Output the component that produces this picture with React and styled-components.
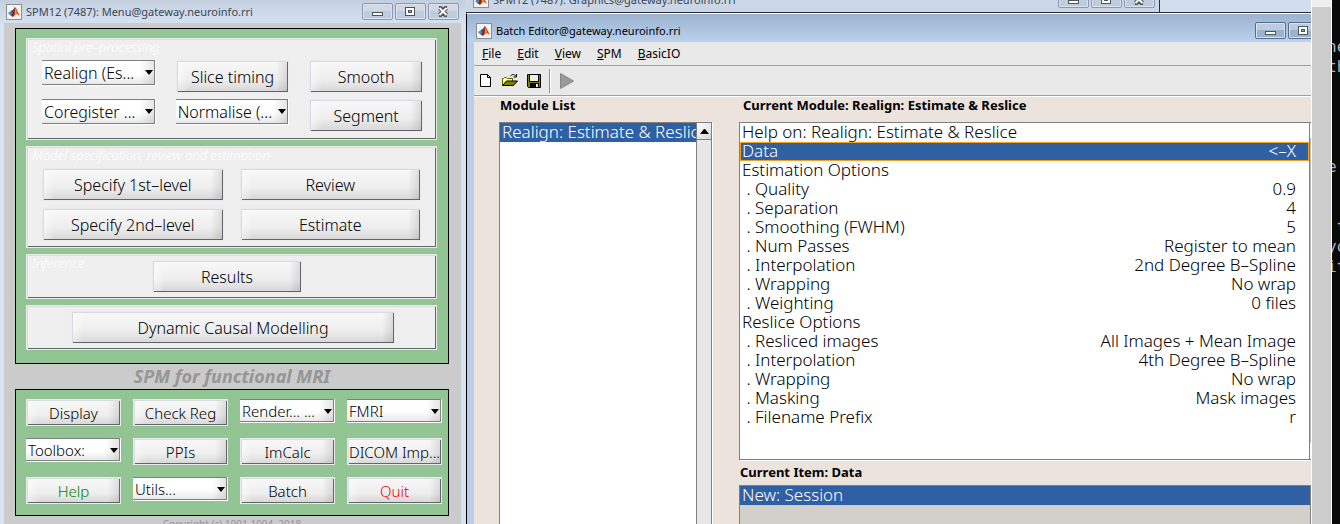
import React from "react";
import styled, { createGlobalStyle, css } from "styled-components";

const GlobalStyle = createGlobalStyle`
  *, *::before, *::after { box-sizing: border-box; }
  html, body { margin: 0; }
  body {
    background: #0a0a0a;
    color: #000;
    font-family: "Noto Sans", "Open Sans", sans-serif;
    font-size: 16px;
  }
  button, select { font-family: inherit; color: inherit; }
`;

const Desktop = styled.div`
  display: flex;
  align-items: stretch;
  height: 100vh;
  overflow: hidden;
`;

/* ---------- window chrome ---------- */

const TitleBar = styled.header`
  display: flex;
  flex: none;
  align-items: center;
  gap: 4px;
  height: ${(p) => (p.$active ? 28 : 23)}px;
  padding: ${(p) => (p.$active ? "5px 0 0 5px" : "0 1px 0 2px")};
  color: ${(p) => (p.$active ? "#000" : "#3c4654")};
  background: ${(p) =>
    p.$active
      ? "linear-gradient(#9cb3cf, #bad2ee)"
      : "linear-gradient(#c4cfde, #d5e1f1)"};
`;

const WindowTitle = styled.h1`
  flex: 1;
  min-width: 0;
  margin: 0;
  overflow: hidden;
  white-space: nowrap;
  font-size: 11px;
  line-height: 16px;
  font-weight: 400;
`;

const WindowButtons = styled.div`
  display: flex;
  flex: none;
  gap: 2px;
`;

const WindowButton = styled.button`
  display: flex;
  align-items: center;
  justify-content: center;
  width: 31px;
  height: 17px;
  padding: 0;
  border: 1px solid ${(p) => (p.$active ? "#566d8c" : "#8a99af")};
  border-radius: 2px;
  background: ${(p) =>
    p.$active
      ? "linear-gradient(#bccbdd 0 50%, #9ab2cf 50% 100%)"
      : "linear-gradient(#cfd8e4 0 50%, #bfccdd 50% 100%)"};
  box-shadow: inset 0 0 0 1px #d9e3ee;
`;

const Glyphs = {
  minimize: <rect x="3.500" y="7.500" width="10" height="3" fill="#fff" stroke="#4c545e" />,
  maximize: (
    <>
      <rect x="3.500" y="2.500" width="9" height="8" fill="#fff" stroke="#4c545e" />
      <rect x="6.500" y="5.500" width="3" height="2" fill="#8ea3bd" stroke="#4c545e" />
    </>
  ),
  close: (
    <>
      <path d="M4 3h1.500l2.500 2.500 2.500-2.500h1.500M4 10h1.500l2.500-2.500 2.500 2.500h1.500M4.500 3l7 7M11.500 3l-7 7" fill="none" stroke="#4c545e" strokeWidth="4" />
      <path d="M4.500 3l7 7M11.500 3l-7 7" stroke="#fff" strokeWidth="2" />
    </>
  ),
};

function Controls({ active }) {
  return (
    <WindowButtons>
      {["minimize", "maximize", "close"].map((k) => (
        <WindowButton key={k} $active={active} aria-label={k}>
          <svg width="17" height="13" viewBox="0 0 17 13">{Glyphs[k]}</svg>
        </WindowButton>
      ))}
    </WindowButtons>
  );
}

const IconBox = styled.svg`
  flex: none;
  width: 16px;
  height: 16px;
`;

const IconPad = styled.span`
  display: flex;
  padding-left: 4px;
`;

const MenuControls = styled.div`
  padding-right: 6px;
`;

function MatlabIcon() {
  return (
    <IconBox viewBox="0 0 16 16" aria-hidden="true">
      <rect x="0.500" y="0.500" width="15" height="15" fill="#f4f4f4" stroke="#8c8c8c" />
      <path d="M2 9l3-2 2-1 2-3-1 6-3 3z" fill="#4a86b8" />
      <path d="M5 7l2-1 2-3v4l-2 3z" fill="#27506f" />
      <path d="M9 3c2 2 3 6 5 9l-3-2-2 1-2 2-2-2c2-1 3-5 4-8z" fill="#d1491c" />
      <path d="M9 4c0 3-1 6-2 9l-2-2c2-1 3-4 4-7z" fill="#7d1f12" />
      <path d="M9 4l2 5-2 2z" fill="#f09a2c" />
    </IconBox>
  );
}

/* ---------- raised controls ---------- */

const raised = css`
  border: 1px solid #ebebee;
  box-shadow: inset 1px 1px #dadbe2, inset -1px -1px #64646c;
`;

const PushButton = styled.button`
  ${raised}
  width: ${(p) => p.$width || "100%"};
  height: ${(p) => (p.$small ? 27 : 33)}px;
  padding: 0;
  overflow: hidden;
  white-space: nowrap;
  font-size: ${(p) => (p.$small ? 15 : 16)}px;
  font-weight: 300;
  line-height: 20px;
  color: ${(p) => p.$color || "#000"};
  background:
    linear-gradient(90deg, #ffffff80, #ffffff00 12px, #00000000 calc(100% - 12px), #0000001c),
    linear-gradient(#f8f8f8, #eeeeee 60%, #d6d6d6);
`;

const SelectBox = styled.label`
  position: relative;
  display: block;
  height: ${(p) => (p.$small ? 24 : 26)}px;
  border-right: 1px solid #fff;
  border-bottom: 1px solid #fff;

  &::after {
    content: "";
    position: absolute;
    right: 2px;
    top: 10px;
    border: 4px solid transparent;
    border-top: 5px solid #000;
    border-bottom: 0;
    pointer-events: none;
  }
`;

const Select = styled.select`
  appearance: none;
  display: block;
  width: 100%;
  height: 100%;
  padding: 0 0 0 2px;
  border: 1px solid #7f7f7f;
  border-left: 0;
  border-radius: 0;
  font-size: ${(p) => (p.$small ? 15 : 16)}px;
  font-weight: 300;
  background:
    linear-gradient(90deg, #00000000 calc(100% - 14px), #0000001a),
    linear-gradient(#fff 55%, #e8e8e8);
`;

function Popup({ label, small }) {
  return (
    <SelectBox $small={small}>
      <Select $small={small} aria-label={label}>
        <option>{label}</option>
      </Select>
    </SelectBox>
  );
}

/* ---------- menu window ---------- */

const MenuWindow = styled.section`
  display: flex;
  flex: 0 0 466px;
  flex-direction: column;
  overflow: hidden;
  background: #d7e3f3;
`;

const MenuBody = styled.div`
  flex: 1;
  margin: 0 5px 0 4px;
  padding: 5px 12px 0 11px;
  background: #cbcbcb;
`;

const GreenPanel = styled.div`
  border: 1px solid #000;
  background: #93c594;
`;

const UpperPanel = styled(GreenPanel)`
  display: flex;
  flex-direction: column;
  gap: 6px;
  padding: 9px 11px 13px 10px;
`;

const LowerPanel = styled(GreenPanel)`
  display: grid;
  grid-template-columns: repeat(4, 1fr);
  grid-auto-rows: 27px;
  gap: 12px 12px;
  padding: 9px 6px 11px 10px;
`;

const Frame = styled.fieldset`
  ${raised}
  margin: 0;
  padding: 4px;
  min-width: 0;
  background: #efefef;
`;

const FrameTitle = styled.h2`
  height: ${(p) => (p.$overlaid ? 0 : 16)}px;
  margin: 0;
  padding-left: 1px;
  overflow: visible;
  white-space: nowrap;
  color: #fff;
  font-size: 13px;
  line-height: 9px;
  font-style: italic;
  font-weight: 300;
`;

const FrameGrid = styled.div`
  display: grid;
  grid-template-columns: repeat(${(p) => p.$cols}, 1fr);
  gap: ${(p) => (p.$cols === 3 ? "6px 20px" : "7px 16px")};
  padding: ${(p) => (p.$cols === 3 ? "1px 9px 3px 11px" : "1px 11px 2px 11px")};
`;

const Centered = styled.div`
  display: flex;
  justify-content: center;
  padding: ${(p) => (p.$wide ? "1px 0 1px 3px" : "1px 9px 1px 0")};
`;

const Suite = styled.p`
  margin: 0;
  color: #969696;
  font-size: 18px;
  line-height: 25px;
  font-style: italic;
  font-weight: 700;
  text-align: center;
`;

const Copyright = styled.p`
  margin: 0;
  color: #969696;
  font-size: 10px;
  line-height: 16px;
  text-align: center;
`;

function MenuApp() {
  return (
    <MenuWindow>
      <TitleBar>
        <IconPad><MatlabIcon /></IconPad>
        <WindowTitle>SPM12 (7487): Menu@gateway.neuroinfo.rri</WindowTitle>
        <MenuControls><Controls /></MenuControls>
      </TitleBar>
      <MenuBody>
        <UpperPanel>
          <Frame>
            <FrameTitle>Spatial pre–processing</FrameTitle>
            <FrameGrid $cols={3}>
              <Popup label="Realign (Es..." />
              <PushButton>Slice timing</PushButton>
              <PushButton>Smooth</PushButton>
              <Popup label="Coregister ..." />
              <Popup label="Normalise (..." />
              <PushButton>Segment</PushButton>
            </FrameGrid>
          </Frame>
          <Frame>
            <FrameTitle>Model specification, review and estimation</FrameTitle>
            <FrameGrid $cols={2}>
              <PushButton>Specify 1st–level</PushButton>
              <PushButton>Review</PushButton>
              <PushButton>Specify 2nd–level</PushButton>
              <PushButton>Estimate</PushButton>
            </FrameGrid>
          </Frame>
          <Frame>
            <FrameTitle $overlaid>Inference</FrameTitle>
            <Centered><PushButton $width="150px">Results</PushButton></Centered>
          </Frame>
          <Frame>
            <Centered $wide><PushButton $width="324px">Dynamic Causal Modelling</PushButton></Centered>
          </Frame>
        </UpperPanel>
        <Suite>SPM for functional MRI</Suite>
        <LowerPanel>
          <PushButton $small>Display</PushButton>
          <PushButton $small>Check Reg</PushButton>
          <Popup small label="Render... ..." />
          <Popup small label="FMRI" />
          <Popup small label="Toolbox:" />
          <PushButton $small>PPIs</PushButton>
          <PushButton $small>ImCalc</PushButton>
          <PushButton $small>DICOM Imp...</PushButton>
          <PushButton $small $color="#008000">Help</PushButton>
          <Popup small label="Utils..." />
          <PushButton $small>Batch</PushButton>
          <PushButton $small $color="#f00000">Quit</PushButton>
        </LowerPanel>
        <Copyright>Copyright (c) 1991,1994–2018</Copyright>
      </MenuBody>
    </MenuWindow>
  );
}

/* ---------- batch editor window ---------- */

const RightStack = styled.div`
  display: flex;
  flex: 1;
  flex-direction: column;
  min-width: 0;
  border-right: 1px solid #fff;
  background: #cbd7e7;
`;

const BehindRow = styled.div`
  display: flex;
  flex: none;
  align-items: flex-end;
  height: 13px;
  padding-left: 3px;
  overflow: hidden;
  border-bottom: 1px solid #2c2c34;
  background: #cbd7e7;
`;

const GraphicsBar = styled.div`
  display: flex;
  flex: 1;
  align-items: flex-end;
  gap: 4px;
  height: 23px;
  padding: 0 4px 4px 4px;
  color: #3c4654;
  border-right: 1px solid #2c2c34;
`;

const FarWindow = styled.div`
  flex: 0 0 151px;
  height: 12px;
  background: #d3deec;
`;

const BatchWindow = styled.section`
  display: flex;
  flex: 1;
  flex-direction: column;
  min-height: 0;
  border-left: 1px solid #000;
  border-top: 1px solid #fff;
  background: #b9cfe9;
`;

const BatchControls = styled.div`
  display: flex;
  flex: 0 0 56px;
  overflow: hidden;
`;

const BatchFrame = styled.div`
  display: flex;
  flex: 1;
  flex-direction: column;
  min-height: 0;
  margin-left: 7px;
  background: #ece3dd;
`;

const barEdge = css`
  border-bottom: 1px solid #a0a0a0;
  box-shadow: 0 1px #fff;
  background: #e9e9e9;
`;

const MenuBar = styled.nav`
  ${barEdge}
  display: flex;
  flex: none;
  align-items: center;
  gap: 16px;
  height: 24px;
  padding-left: 8px;
`;

const MenuItem = styled.button`
  padding: 0;
  border: 0;
  background: none;
  font-size: 12px;
  line-height: 16px;

  &::first-letter { text-decoration: underline; }
`;

const ToolBar = styled.div`
  ${barEdge}
  display: flex;
  flex: none;
  align-items: center;
  gap: 8px;
  height: 30px;
  padding: 0 0 0 4px;
`;

const ToolButton = styled.button`
  display: flex;
  padding: 0;
  border: 0;
  background: none;
`;

const Separator = styled.span`
  width: 2px;
  height: 24px;
  margin: 0 0 0 -1px;
  border-left: 1px solid #8d8d8d;
  border-right: 1px solid #fff;
`;

const BatchBody = styled.div`
  display: flex;
  flex: 1;
  gap: 27px;
  min-height: 0;
  padding-left: 25px;
`;

const ModuleColumn = styled.div`
  display: flex;
  flex: 0 0 213px;
  flex-direction: column;
  min-width: 0;
`;

const DetailColumn = styled.div`
  display: flex;
  flex: 1;
  flex-direction: column;
  min-width: 0;
`;

const Heading = styled.h2`
  margin: 0;
  padding-left: ${(p) => p.$indent || 1}px;
  font-size: 13px;
  line-height: ${(p) => p.$line || 18}px;
  height: ${(p) => p.$height || 26}px;
  font-weight: 700;
  white-space: nowrap;
`;

const ListBox = styled.div`
  display: flex;
  flex: ${(p) => p.$flex || "1"};
  min-width: 0;
  min-height: 0;
  border: 1px solid #7f7f7f;
  border-bottom-width: ${(p) => (p.$closed ? 1 : 0)}px;
  border-right-width: ${(p) => (p.$edge ? 0 : 1)}px;
  box-shadow: 1px 1px #fff;
  background: ${(p) => p.$fill || "#fff"};
`;

const Options = styled.ul`
  flex: 1;
  min-width: 0;
  margin: 0;
  padding: 0;
  overflow: hidden;
  list-style: none;
`;

const Option = styled.li`
  display: flex;
  justify-content: space-between;
  height: 19px;
  padding: 0 13px 0 2px;
  white-space: pre;
  font-size: 17px;
  font-weight: 300;
  line-height: 18px;
  ${(p) => p.$selected && "color: #fff; background: #2f60a3;"}
  ${(p) => p.$focused && "outline: 1px solid #f5a01c; outline-offset: -1px;"}
`;

const ScrollTrack = styled.div`
  flex: 0 0 15px;
  border-left: 1px solid #7f7f7f;
  background: #e8e8e8;
`;

const ScrollUp = styled.button`
  display: flex;
  align-items: center;
  justify-content: center;
  width: 100%;
  height: 17px;
  padding: 0;
  border: 0;
  border-bottom: 1px solid #7f7f7f;
  background: linear-gradient(135deg, #fff, #d4d4d4);
`;

const ScrollEdge = styled.div`
  flex: 0 0 2px;
  border-left: 1px solid #7f7f7f;
  background: linear-gradient(#fff 15px, #bdbdbd 15px calc(100% - 16px), #fff calc(100% - 16px));
`;

function NewIcon() {
  return (
    <svg width="16" height="16" viewBox="0 0 16 16" aria-hidden="true">
      <path d="M2.500 1.500h7l3 3v9h-10z" fill="#fff" stroke="#000" />
      <path d="M9.500 1.500v3h3" fill="none" stroke="#000" />
    </svg>
  );
}

function OpenIcon() {
  return (
    <svg width="16" height="16" viewBox="0 0 16 16" aria-hidden="true">
      <path d="M0.500 12.500v-7h1l1-1h2l1 1h5v3h-6z" fill="#ffff9a" stroke="#5c5c00" />
      <path d="M0.500 12.500l4-4.500h11l-4 4.500z" fill="#808000" stroke="#000" />
      <path d="M8.500 3c2-2 4-2 5.500 0.500M14.500 1v3h-3" fill="none" stroke="#000" />
    </svg>
  );
}

function SaveIcon() {
  return (
    <svg width="16" height="16" viewBox="0 0 16 16" aria-hidden="true">
      <path d="M1.500 1.500h13v13h-12l-1-1z" fill="#808000" stroke="#000" />
      <rect x="4" y="2" width="8" height="6" fill="#eee" />
      <path d="M3.500 2v6.500h9V2" fill="none" stroke="#000" />
      <rect x="4" y="10" width="9" height="5" fill="#000" />
      <rect x="10" y="11" width="2" height="3" fill="#eee" />
    </svg>
  );
}

function RunIcon() {
  return (
    <svg width="16" height="18" viewBox="0 0 16 18" aria-hidden="true">
      <path d="M1.500 1.500v15l13-7.500z" fill="#9a9a9a" stroke="#868686" />
    </svg>
  );
}

const modules = [
  ["Help on: Realign: Estimate & Reslice", ""],
  ["Data", "<–X"],
  ["Estimation Options", ""],
  [" . Quality", "0.9"],
  [" . Separation", "4"],
  [" . Smoothing (FWHM)", "5"],
  [" . Num Passes", "Register to mean"],
  [" . Interpolation", "2nd Degree B–Spline"],
  [" . Wrapping", "No wrap"],
  [" . Weighting", "0 files"],
  ["Reslice Options", ""],
  [" . Resliced images", "All Images + Mean Image"],
  [" . Interpolation", "4th Degree B–Spline"],
  [" . Wrapping", "No wrap"],
  [" . Masking", "Mask images"],
  [" . Filename Prefix", "r"],
];

function BatchEditor() {
  return (
    <BatchWindow>
      <TitleBar $active>
        <IconPad><MatlabIcon /></IconPad>
        <WindowTitle>Batch Editor@gateway.neuroinfo.rri</WindowTitle>
        <BatchControls><Controls active /></BatchControls>
      </TitleBar>
      <BatchFrame>
        <MenuBar>
          {["File", "Edit", "View", "SPM", "BasicIO"].map((m) => (
            <MenuItem key={m}>{m}</MenuItem>
          ))}
        </MenuBar>
        <ToolBar>
          <ToolButton aria-label="New"><NewIcon /></ToolButton>
          <ToolButton aria-label="Open"><OpenIcon /></ToolButton>
          <ToolButton aria-label="Save"><SaveIcon /></ToolButton>
          <Separator />
          <ToolButton aria-label="Run"><RunIcon /></ToolButton>
        </ToolBar>
        <BatchBody>
          <ModuleColumn>
            <Heading>Module List</Heading>
            <ListBox>
              <Options role="listbox" aria-label="Module List">
                <Option role="option" aria-selected="true" $selected>Realign: Estimate & Reslice</Option>
              </Options>
              <ScrollTrack>
                <ScrollUp aria-label="Scroll up">
                  <svg width="9" height="5" viewBox="0 0 9 5"><path d="M0 5l4-5h1l4 5z" /></svg>
                </ScrollUp>
              </ScrollTrack>
            </ListBox>
          </ModuleColumn>
          <DetailColumn>
            <Heading $indent={4}>Current Module: Realign: Estimate & Reslice</Heading>
            <ListBox $flex="0 0 338px" $closed $edge>
              <Options role="listbox" aria-label="Current Module">
                {modules.map(([name, value], i) => (
                  <Option key={i} role="option" aria-selected={i === 1} $selected={i === 1} $focused={i === 1}>
                    <span>{name}</span>
                    <span>{value}</span>
                  </Option>
                ))}
              </Options>
              <ScrollEdge />
            </ListBox>
            <Heading $line={25} $height={25}>Current Item: Data</Heading>
            <ListBox $fill="#d3d0cb">
              <Options role="listbox" aria-label="Current Item">
                <Option role="option" aria-selected="true" $selected>New: Session</Option>
              </Options>
            </ListBox>
          </DetailColumn>
        </BatchBody>
      </BatchFrame>
    </BatchWindow>
  );
}

/* ---------- right edge ---------- */

const GrayStrip = styled.div`
  flex: 0 0 20px;
  border-right: 1px solid #fff;
  background: linear-gradient(#efefef 7px, #cccccc 7px);
`;

const Terminal = styled.pre`
  flex: 0 0 8px;
  margin: 0;
  padding-top: 37px;
  overflow: hidden;
  text-indent: -5px;
  color: #a9b4bd;
  background: #0a0a0a;
  font-family: "DejaVu Sans Mono", monospace;
  font-size: 16px;
  line-height: 20px;
`;

export default function App() {
  return (
    <Desktop>
      <GlobalStyle />
      <MenuApp />
      <RightStack>
        <BehindRow>
          <GraphicsBar>
            <MatlabIcon />
            <WindowTitle as="p">SPM12 (7487): Graphics@gateway.neuroinfo.rri</WindowTitle>
            <Controls />
          </GraphicsBar>
          <FarWindow />
        </BehindRow>
        <BatchEditor />
      </RightStack>
      <GrayStrip />
      <Terminal>
        {["ne", "th", "", "", "", "", "e", "", "", " t", "yo", "it"].map((line, i) => (
          <div key={i}>{line || " "}</div>
        ))}
      </Terminal>
    </Desktop>
  );
}
